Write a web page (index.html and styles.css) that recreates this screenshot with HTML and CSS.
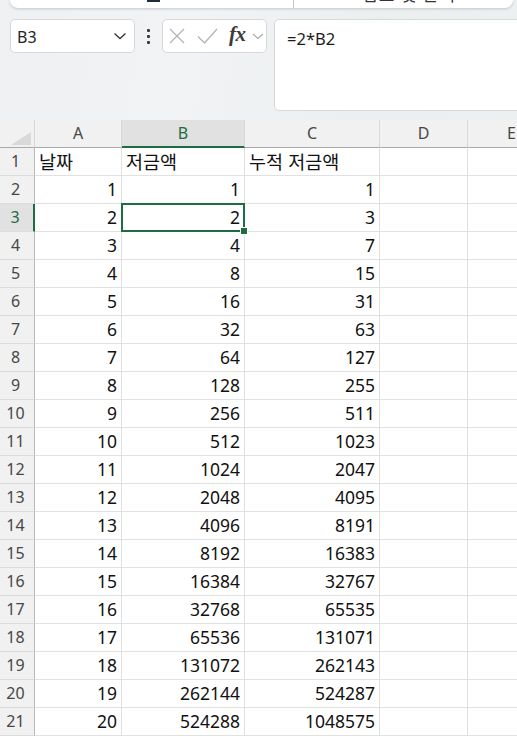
FILE: index.html
```html
<!DOCTYPE html>
<html lang="ko">
<head>
<meta charset="utf-8">
<link rel="stylesheet" href="styles.css">
</head>
<body>
<div class="top">
  <div class="ribbon">
    <span class="rb-bar"></span>
    <span class="rb-sep"></span>
    <span class="rb-text">검토 및 분석</span>
  </div>
  <div class="fbar">
    <div class="namebox">
      <span class="nb-text">B3</span>
      <svg class="nb-chev" width="14" height="8" viewBox="0 0 14 8"><path d="M1.5 1.5 L7 6.5 L12.5 1.5" fill="none" stroke="#333" stroke-width="1.3"/></svg>
    </div>
    <div class="dots"><i></i><i></i><i></i></div>
    <div class="fxbox">
      <svg class="ic-x" width="16" height="16" viewBox="0 0 16 16"><path d="M1 1 L15 15 M15 1 L1 15" fill="none" stroke="#b4b4b4" stroke-width="1.3"/></svg>
      <svg class="ic-ok" width="21" height="16" viewBox="0 0 21 16"><path d="M1 8.5 L7.5 15 L20 1" fill="none" stroke="#b4b4b4" stroke-width="1.3"/></svg>
      <span class="fx">fx</span>
      <svg class="ic-chev" width="12" height="7" viewBox="0 0 12 7"><path d="M1 1 L6 5.5 L11 1" fill="none" stroke="#a8a8a8" stroke-width="1.1"/></svg>
    </div>
    <div class="formula">=2*B2</div>
  </div>
</div>
<div class="gridwrap">
  <div class="grid" id="grid"></div>
</div>
<script src="app.js"></script>
</body>
</html>
```
FILE: app.js
```js
(function () {
  var g = document.getElementById('grid');
  function cell(cls, txt) {
    var d = document.createElement('div');
    d.className = 'c ' + cls;
    if (txt !== undefined) d.textContent = txt;
    g.appendChild(d);
    return d;
  }
  var corner = cell('corner');
  corner.appendChild(document.createElement('span')).className = 'tri';
  ['A', 'B', 'C', 'D', 'E'].forEach(function (l) {
    cell('ch' + (l === 'B' ? ' sel' : ''), l);
  });
  for (var r = 1; r <= 21; r++) {
    cell('rh' + (r === 3 ? ' sel' : ''), String(r));
    if (r === 1) {
      cell('txt', '날짜');
      cell('txt', '저금액');
      cell('txt', '누적 저금액');
    } else {
      var n = r - 1;
      var b = Math.pow(2, n - 1);
      var c = Math.pow(2, n) - 1;
      cell('num', String(n));
      cell('num' + (r === 3 ? ' active' : ''), String(b));
      cell('num', String(c));
    }
    cell('empty');
    cell('empty last');
  }
})();
```
FILE: styles.css
```css
html, body {
  margin: 0;
  padding: 0;
}
body {
  width: 517px;
  height: 736px;
  overflow: hidden;
  background: #fff;
  font-family: "Noto Sans", "Noto Sans CJK KR", sans-serif;
  color: #222;
}
.top {
  height: 120px;
  background: linear-gradient(100deg, #eef0f1 0%, #f1f3f4 35%, #eceff0 70%, #edf0f1 100%);
  overflow: hidden;
}
.ribbon {
  height: 8px;
  margin: 0 4px 0 10px;
  background: #fff;
  border-radius: 0 0 8px 8px;
  box-shadow: 0 1px 3px rgba(0,0,0,0.18);
  display: flex;
  align-items: flex-end;
  overflow: hidden;
  position: relative;
}
.rb-bar {
  width: 13px;
  height: 2px;
  background: #1f2d3d;
  margin-left: 137px;
  align-self: flex-start;
}
.rb-sep {
  width: 1px;
  height: 9px;
  background: #c8c8c8;
  margin-left: 133px;
  align-self: flex-start;
}
.rb-text {
  margin-left: 68px;
  font-size: 17px;
  line-height: 20px;
  height: 20px;
  margin-bottom: 3px;
  color: #333;
  letter-spacing: 1px;
  flex: none;
}
.fbar {
  display: flex;
  align-items: flex-start;
  padding: 11px 0 0 10px;
}
.namebox {
  width: 125px;
  height: 34px;
  box-sizing: border-box;
  background: #fff;
  border: 1px solid #d6d8da;
  border-radius: 5px;
  display: flex;
  align-items: center;
  padding: 2px 7px 0 6px;
}
.nb-text {
  font-size: 16px;
  color: #242424;
  flex: 1;
}
.nb-chev {
  margin-top: -2px;
}
.dots {
  width: 27px;
  height: 34px;
  display: flex;
  flex-direction: column;
  align-items: center;
  justify-content: center;
  gap: 3px;
}
.dots i {
  width: 3px;
  height: 3px;
  background: #3a3a3a;
  border-radius: 1px;
}
.fxbox {
  width: 105px;
  height: 34px;
  box-sizing: border-box;
  background: #fff;
  border: 1px solid #d6d8da;
  border-radius: 5px;
  display: flex;
  align-items: center;
  padding-left: 6px;
}
.ic-x { margin-left: 0; }
.ic-ok { margin-left: 12px; }
.fx {
  font-family: "Liberation Serif", "DejaVu Serif", serif;
  font-style: italic;
  font-weight: bold;
  font-size: 21px;
  color: #3a3a3a;
  margin-left: 11px;
  margin-top: -3px;
  letter-spacing: -0.5px;
}
.ic-chev { margin-left: 6px; }
.formula {
  flex: 1;
  margin-left: 7px;
  margin-right: -12px;
  height: 92px;
  box-sizing: border-box;
  background: #fff;
  border: 1px solid #d6d8da;
  border-radius: 5px;
  padding: 9px 12px;
  font-size: 16.5px;
  line-height: 20px;
  color: #1c1c1c;
}
.gridwrap {
  width: 517px;
  overflow: hidden;
}
.grid {
  display: grid;
  grid-template-columns: 35px 87px 123px 135px 88px 88px;
  grid-auto-rows: 28px;
  width: 556px;
}
.c {
  box-sizing: border-box;
  border-right: 1px solid #e1e1e1;
  border-bottom: 1px solid #e1e1e1;
  white-space: nowrap;
  overflow: visible;
  position: relative;
}
.corner {
  background: #f1f1f1;
  border-right: 1px solid #d8d8d8;
  border-bottom: 1px solid #a9a9a9;
}
.tri {
  position: absolute;
  right: 3px;
  bottom: 2px;
  width: 0;
  height: 0;
  border-style: solid;
  border-width: 0 0 13px 20px;
  border-color: transparent transparent #d9d9d9 transparent;
}
.ch {
  background: #f1f1f1;
  border-right: 1px solid #d8d8d8;
  border-bottom: 1px solid #a9a9a9;
  text-align: center;
  font-size: 16px;
  line-height: 27px;
  color: #474747;
}
.ch.sel {
  background: #e1e1e1;
  color: #1e6c41;
  border-bottom: 2px solid #1e6c41;
  line-height: 26px;
}
.rh {
  background: #f1f1f1;
  border-right: 1px solid #b9b9b9;
  border-bottom: 1px solid #dcdcdc;
  text-align: center;
  font-size: 16px;
  line-height: 27px;
  color: #474747;
  padding-right: 3px;
}
.rh.sel {
  background: #e1e1e1;
  color: #1e6c41;
  border-right: 2px solid #1e6c41;
}
.num {
  text-align: right;
  padding-right: 4px;
  font-size: 17.5px;
  line-height: 27px;
  color: #111;
}
.txt {
  padding-left: 4px;
  font-family: "Noto Sans CJK KR", "Noto Sans", sans-serif;
  font-size: 18.5px;
  line-height: 27px;
  color: #111;
}
.active::after {
  content: "";
  position: absolute;
  left: -1px;
  top: -1px;
  right: -1px;
  bottom: -1px;
  border: 2px solid #1e6c41;
  pointer-events: none;
}
.active::before {
  content: "";
  position: absolute;
  right: -4px;
  bottom: -4px;
  width: 6px;
  height: 6px;
  background: #1e6c41;
  border: 1px solid #fff;
  z-index: 2;
}
```
